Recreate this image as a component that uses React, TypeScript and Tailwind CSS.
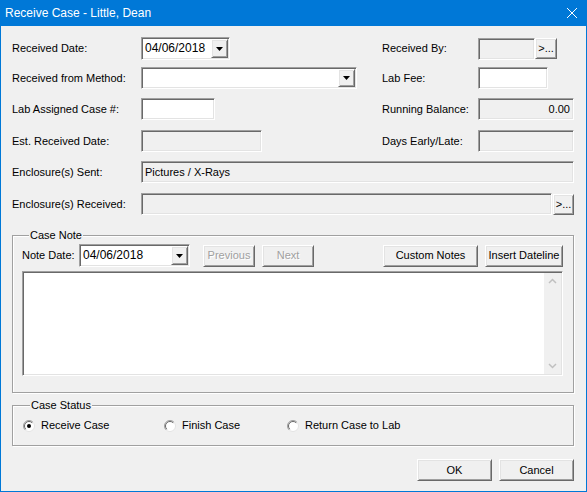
import React from "react";

// classic win32 3D edges
const sunken =
  "border border-t-[#a0a0a0] border-l-[#a0a0a0] border-b-white border-r-white shadow-[inset_1px_1px_0_#696969,inset_-1px_-1px_0_#e3e3e3]";
const raised =
  "border border-t-white border-l-white border-b-[#696969] border-r-[#696969] shadow-[inset_1px_1px_0_#e3e3e3,inset_-1px_-1px_0_#a0a0a0] bg-[#f0f0f0]";

function DropArrow() {
  return (
    <div className={`${raised} w-[17px] h-full flex items-center justify-center shrink-0`}>
      <svg width="7" height="4" viewBox="0 0 7 4">
        <path d="M0 0 H7 L3.5 4 Z" fill="#000" />
      </svg>
    </div>
  );
}

function Combo({ value, width }: { value: string; width: string }) {
  return (
    <div className={`${sunken} ${width} h-full bg-white flex items-stretch p-[1px]`}>
      <div className="flex-1 pl-[2px] flex items-center text-[12px]">{value}</div>
      <DropArrow />
    </div>
  );
}

function Box({ width, value, disabled, right }: { width: string; value?: string; disabled?: boolean; right?: boolean }) {
  return (
    <div
      className={`${sunken} ${width} h-full flex items-center px-[3px] ${disabled ? "bg-[#f0f0f0]" : "bg-white"} ${right ? "justify-end" : ""}`}
    >
      {value}
    </div>
  );
}

function Btn({ label, width, disabled }: { label: string; width: string; disabled?: boolean }) {
  return (
    <button
      className={`${raised} ${width} h-[22px] flex items-center justify-center ${disabled ? "text-[#a0a0a0] [text-shadow:1px_1px_0_#fff]" : "text-black"}`}
    >
      {label}
    </button>
  );
}

function Radio({ checked, label, width }: { checked?: boolean; label: string; width: string }) {
  return (
    <div className={`${width} flex items-center`}>
      <svg width="12" height="12" viewBox="0 0 12 12" className="shrink-0">
        <circle cx="6" cy="6" r="5.5" fill="#fff" stroke="#e3e3e3" />
        <path d="M2.1 9.9 A5.5 5.5 0 0 1 9.9 2.1" fill="none" stroke="#a0a0a0" />
        <path d="M2.8 9.2 A4.5 4.5 0 0 1 9.2 2.8" fill="none" stroke="#696969" />
        {checked && <circle cx="6" cy="6" r="2" fill="#000" />}
      </svg>
      <span className="ml-[6px]">{label}</span>
    </div>
  );
}

export default function App() {
  return (
    <div className="w-[587px] h-[492px] bg-[#0078d7] flex flex-col px-[1px] pb-[1px] font-['Liberation_Sans',Arial,sans-serif] text-[11px] text-black leading-[13px]">
      {/* Title bar */}
      <div className="h-[26px] flex items-center justify-between pl-[4px] pr-[9px] text-white text-[12px]">
        <span>Receive Case - Little, Dean</span>
        <svg width="10" height="10" viewBox="0 0 10 10">
          <path d="M0 0 L10 10 M10 0 L0 10" stroke="#fff" strokeWidth="1" />
        </svg>
      </div>

      <div className="flex-1 bg-[#f0f0f0] px-[11px] flex flex-col">
        {/* Row 1 */}
        <div className="mt-[11px] h-[23px] flex items-center">
          <div className="w-[129px]">Received Date:</div>
          <Combo value="04/06/2018" width="w-[89px]" />
          <div className="ml-[152px] w-[96px]">Received By:</div>
          <div className="h-[22px] flex items-start">
            <Box width="w-[57px]" disabled />
            <button className={`${raised} w-[22px] h-[21px] flex items-center justify-center`}>&gt;...</button>
          </div>
        </div>

        {/* Row 2 */}
        <div className="mt-[7px] h-[22px] flex items-center">
          <div className="w-[129px]">Received from Method:</div>
          <Combo value="" width="w-[216px]" />
          <div className="ml-[25px] w-[96px]">Lab Fee:</div>
          <Box width="w-[70px]" />
        </div>

        {/* Row 3 */}
        <div className="mt-[9px] h-[22px] flex items-center">
          <div className="w-[129px]">Lab Assigned Case #:</div>
          <Box width="w-[74px]" />
          <div className="ml-[167px] w-[96px]">Running Balance:</div>
          <Box width="w-[96px]" disabled right value="0.00" />
        </div>

        {/* Row 4 */}
        <div className="mt-[10px] h-[22px] flex items-center">
          <div className="w-[129px]">Est. Received Date:</div>
          <Box width="w-[121px]" disabled />
          <div className="ml-[120px] w-[96px]">Days Early/Late:</div>
          <Box width="w-[96px]" disabled />
        </div>

        {/* Row 5 */}
        <div className="mt-[9px] h-[22px] flex items-center">
          <div className="w-[129px]">Enclosure(s) Sent:</div>
          <Box width="w-[433px]" disabled value="Pictures / X-Rays" />
        </div>

        {/* Row 6 */}
        <div className="mt-[10px] h-[22px] flex items-center">
          <div className="w-[129px]">Enclosure(s) Received:</div>
          <Box width="w-[411px]" disabled />
          <button className={`${raised} ml-[1px] w-[21px] h-[21px] flex items-center justify-center`}>&gt;...</button>
        </div>

        {/* Case Note */}
        <fieldset className="mt-[14px] w-[562px] border border-[#a0a0a0] shadow-[inset_1px_1px_0_#fff,1px_1px_0_#fff] pl-[9px] pr-[10px] pt-[2px] pb-[16px]">
          <legend className="ml-[7px] px-[1px] bg-[#f0f0f0]">Case Note</legend>
          <div className="h-[23px] flex items-center">
            <div className="w-[57px]">Note Date:</div>
            <Combo value="04/06/2018" width="w-[111px]" />
            <div className="ml-[13px] flex gap-[7px]">
              <Btn label="Previous" width="w-[52px]" disabled />
              <Btn label="Next" width="w-[52px]" disabled />
            </div>
            <div className="ml-auto flex gap-[7px]">
              <Btn label="Custom Notes" width="w-[95px]" />
              <Btn label="Insert Dateline" width="w-[78px]" />
            </div>
          </div>
          <div className={`${sunken} mt-[4px] h-[105px] bg-white flex justify-end p-[1px]`}>
            <div className="w-[17px] bg-[#f0f0f0] flex flex-col justify-between items-center py-[5px]">
              <svg width="9" height="6" viewBox="0 0 9 6">
                <path d="M1 5 L4.5 1.5 L8 5" fill="none" stroke="#c0c0c0" strokeWidth="1.5" />
              </svg>
              <svg width="9" height="6" viewBox="0 0 9 6">
                <path d="M1 1 L4.5 4.5 L8 1" fill="none" stroke="#c0c0c0" strokeWidth="1.5" />
              </svg>
            </div>
          </div>
        </fieldset>

        {/* Case Status */}
        <fieldset className="mt-[6px] w-[562px] border border-[#a0a0a0] shadow-[inset_1px_1px_0_#fff,1px_1px_0_#fff] pl-[10px] pt-[7px] pb-[13px]">
          <legend className="ml-[7px] px-[1px] bg-[#f0f0f0]">Case Status</legend>
          <div className="h-[13px] flex items-center">
            <Radio checked label="Receive Case" width="w-[141px]" />
            <Radio label="Finish Case" width="w-[123px]" />
            <Radio label="Return Case to Lab" width="w-[140px]" />
          </div>
        </fieldset>

        {/* Buttons */}
        <div className="mt-[13px] flex justify-end gap-[7px] pr-[1px]">
          <Btn label="OK" width="w-[75px]" />
          <Btn label="Cancel" width="w-[75px]" />
        </div>
      </div>
    </div>
  );
}
